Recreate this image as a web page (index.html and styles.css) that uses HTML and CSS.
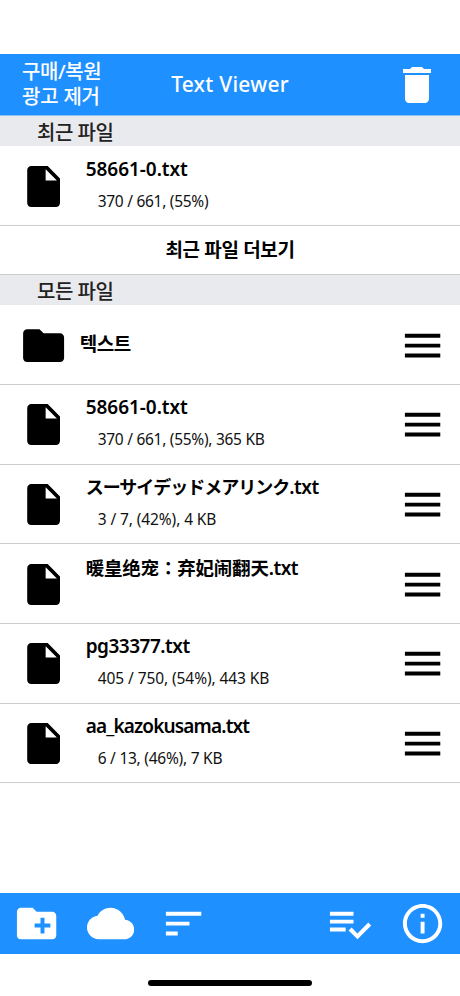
FILE: index.html
```html
<!DOCTYPE html>
<html lang="ko">
<head>
<meta charset="utf-8">
<title>Text Viewer</title>
<link rel="stylesheet" href="styles.css">
</head>
<body>
<svg class="defs" aria-hidden="true">
  <symbol id="file" viewBox="0 0 24 24"><path d="M6 2c-1.1 0-1.99.9-1.99 2L4 20c0 1.1.89 2 1.99 2H18c1.1 0 2-.9 2-2V8l-6-6H6zm7 7V3.500L18.500 9H13z"/></symbol>
  <symbol id="menu" viewBox="0 0 24 24"><path d="M3 18h18v-2H3v2zm0-5h18v-2H3v2zm0-7v2h18V6H3z"/></symbol>
</svg>
<div class="screen">
  <header class="topbar">
    <div class="purchase"><span class="buy">구매/복원</span><br><span class="ads">광고 제거</span></div>
    <h1 class="title">Text Viewer</h1>
    <svg class="trash" viewBox="0 0 24 24"><path d="M6 19c0 1.100.9 2 2 2h8c1.100 0 2-.9 2-2V7H6v12zM19 4h-3.500l-1-1h-5l-1 1H5v2h14V4z"/></svg>
  </header>
  <h2 class="section"><span>최근 파일</span></h2>
  <div class="row">
    <svg class="icon"><use href="#file"/></svg>
    <div class="info"><div class="name"><span class="n1">58661-0.txt</span></div><div class="meta"><span class="m1">370 / 661, (55%)</span></div></div>
  </div>
  <div class="more"><span>최근 파일 더보기</span></div>
  <h2 class="section"><span>모든 파일</span></h2>
  <div class="row folder">
    <svg class="icon" viewBox="0 0 24 24"><path d="M10 4H4c-1.100 0-1.990.9-1.990 2L2 18c0 1.100.9 2 2 2h16c1.100 0 2-.9 2-2V8c0-1.100-.9-2-2-2h-8l-2-2z"/></svg>
    <div class="info"><div class="name"><span class="nf">텍스트</span></div></div>
    <svg class="handle"><use href="#menu"/></svg>
  </div>
  <div class="row">
    <svg class="icon"><use href="#file"/></svg>
    <div class="info"><div class="name"><span class="n1">58661-0.txt</span></div><div class="meta"><span class="m2">370 / 661, (55%), 365 KB</span></div></div>
    <svg class="handle"><use href="#menu"/></svg>
  </div>
  <div class="row">
    <svg class="icon"><use href="#file"/></svg>
    <div class="info"><div class="name"><span class="nj" lang="ja">スーサイデッドメアリンク<span class="ext">.txt</span></span></div><div class="meta"><span class="m3">3 / 7, (42%), 4 KB</span></div></div>
    <svg class="handle"><use href="#menu"/></svg>
  </div>
  <div class="row">
    <svg class="icon"><use href="#file"/></svg>
    <div class="info"><div class="name"><span class="nc" lang="zh-CN">暖皇绝宠<span class="colon" lang="zh-TW">：</span>弃妃闹翻天<span class="ext">.txt</span></span></div></div>
    <svg class="handle"><use href="#menu"/></svg>
  </div>
  <div class="row">
    <svg class="icon"><use href="#file"/></svg>
    <div class="info"><div class="name"><span class="n2">pg33377.txt</span></div><div class="meta"><span class="m4">405 / 750, (54%), 443 KB</span></div></div>
    <svg class="handle"><use href="#menu"/></svg>
  </div>
  <div class="row">
    <svg class="icon"><use href="#file"/></svg>
    <div class="info"><div class="name"><span class="n3">aa_kazokusama.txt</span></div><div class="meta"><span class="m5">6 / 13, (46%), 7 KB</span></div></div>
    <svg class="handle"><use href="#menu"/></svg>
  </div>
  <nav class="toolbar">
    <svg viewBox="0 0 24 24"><path d="M20 6h-8l-2-2H4c-1.110 0-1.990.89-1.990 2L2 18c0 1.110.89 2 2 2h16c1.110 0 2-.89 2-2V8c0-1.110-.89-2-2-2zm-1 8h-3v3h-2v-3h-3v-2h3V9h2v3h3v2z"/></svg>
    <svg viewBox="0 0 24 24"><path d="M19.350 10.040C18.670 6.590 15.640 4 12 4 9.110 4 6.600 5.640 5.350 8.040 2.340 8.360 0 10.910 0 14c0 3.310 2.690 6 6 6h13c2.760 0 5-2.240 5-5 0-2.640-2.050-4.780-4.650-4.960z"/></svg>
    <svg viewBox="0 0 24 24"><path d="M3 18h6v-2H3v2zM3 6v2h18V6H3zm0 7h12v-2H3v2z"/></svg>
    <svg class="push" viewBox="0 0 24 24"><path d="M14 10H2v2h12v-2zm0-4H2v2h12V6zM2 16h8v-2H2v2zm19.500-4.500L23 13l-6.990 7-4.510-4.500L13 14l3.010 3 5.490-5.500z"/></svg>
    <svg viewBox="0 0 24 24"><path d="M11 17h2v-6h-2v6zm1-15C6.480 2 2 6.480 2 12s4.480 10 10 10 10-4.480 10-10S17.520 2 12 2zm0 18c-4.410 0-8-3.590-8-8s3.590-8 8-8 8 3.590 8 8-3.590 8-8 8zM11 9h2V7h-2v2z"/></svg>
  </nav>
  <div class="home"></div>
</div>
</body>
</html>
```
FILE: styles.css
```css
* { box-sizing: border-box; }
body {
  margin: 0;
  background: #fff;
  color: #000;
  font-family: "Noto Sans", "Noto Sans CJK KR", sans-serif;
  white-space: nowrap;
}
svg { flex: none; fill: currentColor; }
.defs { display: none; }
.screen {
  width: 460px;
  height: 996px;
  padding-top: 54px;
  display: flex;
  flex-direction: column;
  overflow: hidden;
}
.topbar {
  flex: none;
  height: 61.500px;
  background: #1e90ff;
  color: #fff;
  border-bottom: 1px solid #8fc2f2;
  display: grid;
  grid-template-columns: 149px 1fr 149px;
  align-items: center;
  font-weight: 500;
}
.purchase { padding-left: 22px; font-size: 20px; line-height: 25px; }
.buy { letter-spacing: -.4px; }
.ads { letter-spacing: -.2px; }
.title { margin: 0; text-align: center; font-size: 21px; font-weight: 500; line-height: 28px; letter-spacing: .25px; }
.trash { width: 48px; height: 48px; justify-self: end; margin: 1px 19px 0 0; }
.section {
  flex: none;
  margin: 0;
  height: 30.800px;
  padding-left: 37px;
  background: #e9eaed;
  color: #222;
  font-size: 20px;
  font-weight: 500;
  line-height: 33px;
  letter-spacing: -.5px;
}
.row {
  flex: none;
  height: 79.650px;
  border-bottom: 1px solid #ccc;
  display: flex;
  align-items: center;
  padding: 1px 13.700px 0 18.500px;
}
.icon { width: 49.200px; height: 49.200px; }
.info { flex: 1; align-self: stretch; padding: 8.300px 0 0 18px; }
.name { height: 27px; font-size: 19px; font-weight: 600; line-height: 27px; }
.n1 { letter-spacing: -.05px; }
.n2 { letter-spacing: -.5px; }
.n3 { letter-spacing: -.85px; }
.nf { letter-spacing: -.4px; }
.nj { font-size: 18px; letter-spacing: -1px; font-family: "Noto Sans", "Noto Sans CJK JP", sans-serif; }
.nc { font-size: 18.500px; letter-spacing: -.2px; font-family: "Noto Sans", "Noto Sans CJK SC", sans-serif; }
.colon { font-family: "Noto Sans CJK TC", sans-serif; }
.ext { font-size: 19px; letter-spacing: -.5px; }
.meta { padding-left: 12px; margin-top: 6px; font-size: 15.500px; line-height: 24px; color: #111; }
.m1, .m2 { letter-spacing: -.28px; }
.m3 { letter-spacing: -.1px; }
.m4 { letter-spacing: -.08px; }
.m5 { letter-spacing: -.25px; }
.folder .info { padding: 25px 0 0 12px; }
.handle { width: 47.200px; height: 47.200px; }
.more {
  flex: none;
  height: 48.700px;
  border-bottom: 1px solid #ccc;
  text-align: center;
  font-size: 19px;
  font-weight: 700;
  line-height: 48px;
  letter-spacing: -.35px;
}
.toolbar {
  flex: none;
  margin-top: auto;
  height: 61px;
  background: #1e90ff;
  color: #fff;
  display: flex;
  align-items: center;
  gap: 26.300px;
  padding: 0 13.400px;
}
.toolbar svg { width: 47.200px; height: 47.200px; }
.push { margin-left: auto; }
.home {
  flex: none;
  width: 164px;
  height: 6px;
  margin: 26px auto 10px 148px;
  border-radius: 3px;
  background: #000;
}
```
